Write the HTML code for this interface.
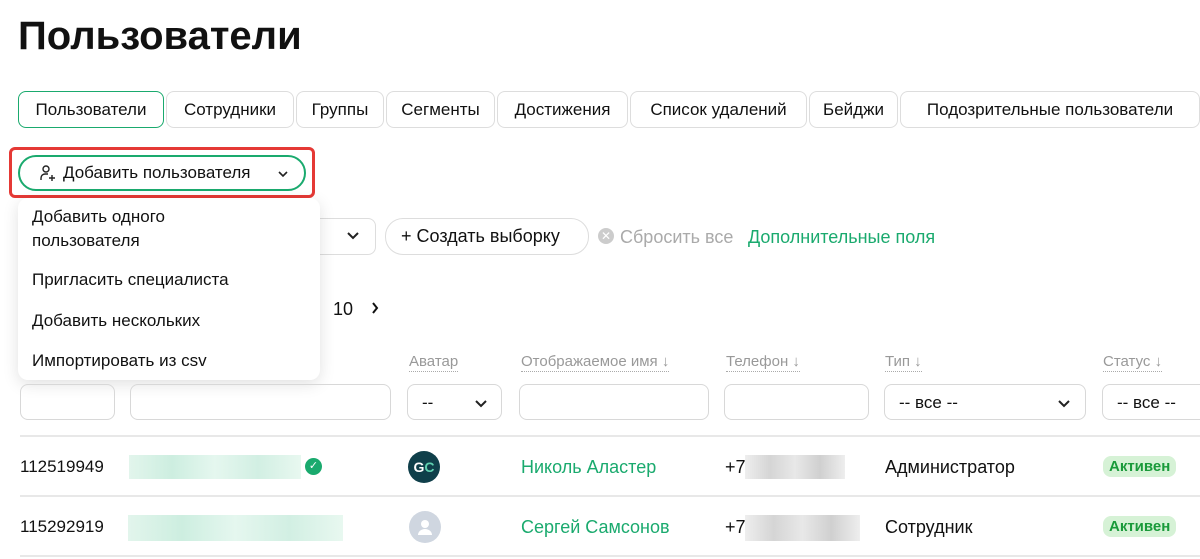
<html><head><style>
body{margin:0;width:1200px;height:559px;overflow:hidden;background:#fff;font-family:"Liberation Sans",sans-serif;color:#111;position:relative}
.a{position:absolute}
.tab{position:absolute;top:91px;height:35px;border:1px solid #ddd;border-radius:8px;font-size:17px;line-height:35px;text-align:center;box-sizing:content-box}
.inp{position:absolute;top:384px;height:36px;border:1px solid #d8d8d8;border-radius:8px;box-sizing:border-box}
.h{position:absolute;top:353px;font-size:15px;color:#999;border-bottom:1px dotted #aaa;line-height:18px}
.line{position:absolute;left:20px;right:0;height:2px;background:#e8e8e8}
.t{position:absolute;font-size:18px;line-height:22px}
.g{color:#1aaa6e}
.badge{position:absolute;left:1103px;background:#d6f2d6;color:#1a9a3a;border-radius:8px;font-size:15px;padding:2px 6px;font-weight:bold}
.blur{position:absolute;background:linear-gradient(90deg,#e2f5ec,#cdeee0,#e5f7ef,#d2efe3,#e8f8f0)}
.blurg{position:absolute;background:linear-gradient(90deg,#eee,#d5d5d5,#e8e8e8,#d0d0d0,#eee)}
</style></head><body>
<div class="a" style="left:18px;top:14px;font-size:40px;font-weight:bold">Пользователи</div>
<div class="tab" style="left:18px;width:144px;border-color:#1aaa6e">Пользователи</div>
<div class="tab" style="left:166px;width:126px">Сотрудники</div>
<div class="tab" style="left:296px;width:86px">Группы</div>
<div class="tab" style="left:386px;width:107px">Сегменты</div>
<div class="tab" style="left:497px;width:129px">Достижения</div>
<div class="tab" style="left:630px;width:175px">Список удалений</div>
<div class="tab" style="left:809px;width:87px">Бейджи</div>
<div class="tab" style="left:900px;width:298px">Подозрительные пользователи</div>

<div class="a" style="left:9px;top:147px;width:300px;height:45px;border:3px solid #e53935;border-radius:6px"></div>
<div class="a" style="left:18px;top:155px;width:284px;height:32px;border:2px solid #1aaa6e;border-radius:18px;font-size:17px;line-height:32px">
<svg class="a" style="left:19px;top:7px" width="18" height="18" viewBox="0 0 18 18" fill="none" stroke="#222" stroke-width="1.4"><circle cx="7" cy="5" r="3"/><path d="M2 16v-2a4 4 0 0 1 4-4h3"/><path d="M13 11v6M10 14h6"/></svg>
<span class="a" style="left:43px">Добавить пользователя</span>
<svg class="a" style="left:258px;top:13px" width="10" height="8"><path d="M1 2l4 4 4-4" stroke="#222" stroke-width="1.6" fill="none"/></svg></div>

<div class="a" style="left:18px;top:218px;width:356px;height:35px;border:1px solid #ddd;border-radius:8px"></div>
<svg class="a" style="left:347px;top:231px" width="12" height="9"><path d="M1 2l5 5 5-5" stroke="#222" stroke-width="2" fill="none"/></svg>
<div class="a" style="left:385px;top:218px;width:202px;height:35px;border:1px solid #ddd;border-radius:18px;font-size:18px;line-height:35px"><span class="a" style="left:15px">+ Создать выборку</span></div>
<div class="a" style="left:598px;top:228px;width:16px;height:16px;border-radius:50%;background:#ccc;color:#fff;font-size:12px;text-align:center;line-height:16px">✕</div>
<div class="t" style="left:620px;top:226px;color:#aaa">Сбросить все</div>
<div class="t g" style="left:748px;top:226px">Дополнительные поля</div>
<div class="t" style="left:333px;top:298px">10</div>
<svg class="a" style="left:371px;top:302px" width="8" height="12"><path d="M2 1l4 5-4 5" stroke="#111" stroke-width="2" fill="none"/></svg>

<div class="a" style="left:18px;top:198px;width:302px;height:182px;background:#fff;border-radius:10px;box-shadow:0 4px 16px rgba(0,0,0,.12)">
<div class="t" style="left:14px;top:7px;line-height:24px;font-size:17px">Добавить одного<br>пользователя</div>
<div class="t" style="left:14px;top:71px;font-size:17px">Пригласить специалиста</div>
<div class="t" style="left:14px;top:112px;font-size:17px">Добавить нескольких</div>
<div class="t" style="left:14px;top:152px;font-size:17px">Импортировать из csv</div>
</div>

<div class="h" style="left:409px">Аватар</div>
<div class="h" style="left:521px">Отображаемое имя ↓</div>
<div class="h" style="left:726px">Телефон ↓</div>
<div class="h" style="left:885px">Тип ↓</div>
<div class="h" style="left:1103px">Статус ↓</div>
<div class="inp" style="left:20px;width:95px"></div>
<div class="inp" style="left:130px;width:261px"></div>
<div class="inp" style="left:407px;width:95px"><span class="a" style="left:14px;top:8px;font-size:17px">--</span><svg class="a" style="left:67px;top:14px" width="12" height="9"><path d="M1 2l5 5 5-5" stroke="#222" stroke-width="2" fill="none"/></svg></div>
<div class="inp" style="left:519px;width:190px"></div>
<div class="inp" style="left:724px;width:145px"></div>
<div class="inp" style="left:884px;width:202px"><span class="a" style="left:14px;top:8px;font-size:17px">-- все --</span><svg class="a" style="left:173px;top:14px" width="12" height="9"><path d="M1 2l5 5 5-5" stroke="#222" stroke-width="2" fill="none"/></svg></div>
<div class="inp" style="left:1102px;width:110px"><span class="a" style="left:14px;top:8px;font-size:17px">-- все --</span></div>

<div class="line" style="top:435px"></div>
<div class="line" style="top:495px"></div>
<div class="line" style="top:555px"></div>

<div class="t" style="left:20px;top:456px;font-size:17px">112519949</div>
<div class="blur" style="left:129px;top:455px;width:172px;height:24px"></div>
<div class="a" style="left:305px;top:458px;width:17px;height:17px;border-radius:50%;background:#1aaa6e;color:#fff;font-size:11px;text-align:center;line-height:17px">✓</div>
<div class="a" style="left:408px;top:451px;width:32px;height:32px;border-radius:50%;background:#0f3f4a;color:#fff;font-weight:bold;font-size:14px;text-align:center;line-height:32px">G<span style="color:#5fd0b0">C</span></div>
<div class="t g" style="left:521px;top:456px">Николь Аластер</div>
<div class="t" style="left:725px;top:456px">+7</div>
<div class="blurg" style="left:745px;top:455px;width:100px;height:24px"></div>
<div class="t" style="left:885px;top:456px">Администратор</div>
<div class="badge" style="top:456px">Активен</div>

<div class="t" style="left:20px;top:516px;font-size:17px">115292919</div>
<div class="blur" style="left:128px;top:515px;width:215px;height:26px"></div>
<div class="a" style="left:409px;top:511px;width:32px;height:32px;border-radius:50%;background:#cfd6e0"><svg width="32" height="32"><circle cx="16" cy="13" r="4" fill="#fff"/><path d="M9 24a7 6 0 0 1 14 0z" fill="#fff"/></svg></div>
<div class="t g" style="left:521px;top:516px">Сергей Самсонов</div>
<div class="t" style="left:725px;top:516px">+7</div>
<div class="blurg" style="left:745px;top:515px;width:115px;height:26px"></div>
<div class="t" style="left:885px;top:516px">Сотрудник</div>
<div class="badge" style="top:516px">Активен</div>
</body></html>
